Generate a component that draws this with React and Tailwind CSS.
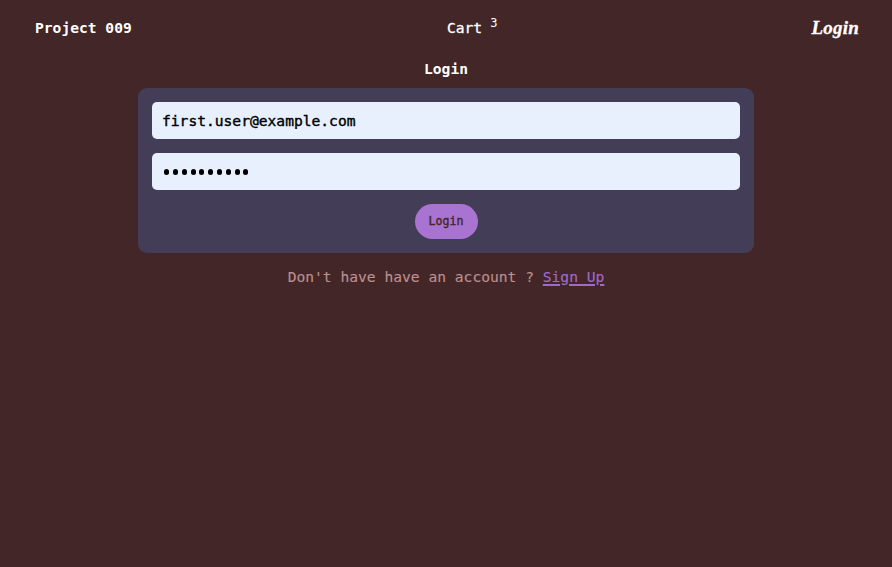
export default function App() {
  return (
    <div className="min-h-screen bg-[#432627] font-['DejaVu_Sans_Mono',monospace] text-[14.62px] text-white">
      <header className="flex h-14 items-center justify-between pl-[35px] pr-[33px]">
        <a href="#" className="font-bold leading-6">Project 009</a>
        <a href="#" className="flex pl-px leading-6">
          <span className="[-webkit-text-stroke:0.3px]">Cart</span>
          <span className="ml-2 -mt-[5px] text-[12px]">3</span>
        </a>
        <a href="#" className="font-['Liberation_Serif',serif] text-[19px] font-bold italic leading-6 tracking-[0.2px] [-webkit-text-stroke:0.3px]">Login</a>
      </header>
      <main className="flex flex-col items-center">
        <h1 className="h-8 font-bold leading-[26px]">Login</h1>
        <form className="flex h-[165px] w-[616px] flex-col items-center gap-[14px] rounded-[9px] bg-[#433d58] p-[14px]">
          <input
            type="text"
            aria-label="Email"
            defaultValue="first.user@example.com"
            className="h-[37px] w-full rounded-[5px] bg-[#e8f0fe] px-[10px] text-black outline-none [-webkit-text-stroke:0.4px]"
          />
          <div className="flex h-[37px] w-full items-center gap-[3.8px] rounded-[5px] bg-[#e8f0fe] px-[12.2px]">
            {Array.from({ length: 10 }, (_, i) => (
              <span key={i} className="h-1.5 w-[5px] rounded-full bg-black" />
            ))}
          </div>
          <button type="button" className="h-[35px] w-[63px] rounded-full bg-[#a873d1] text-[11.63px] font-normal text-[#432627] [-webkit-text-stroke:0.35px]">
            Login
          </button>
        </form>
        <p className="mt-[11px] leading-[26px] text-[#bc8f8f] [-webkit-text-stroke:0.15px]">
          Don't have have an account ?{" "}
          <a href="#" className="text-[#a06aca] underline decoration-[1.5px] underline-offset-2">Sign Up</a>
        </p>
      </main>
    </div>
  );
}
